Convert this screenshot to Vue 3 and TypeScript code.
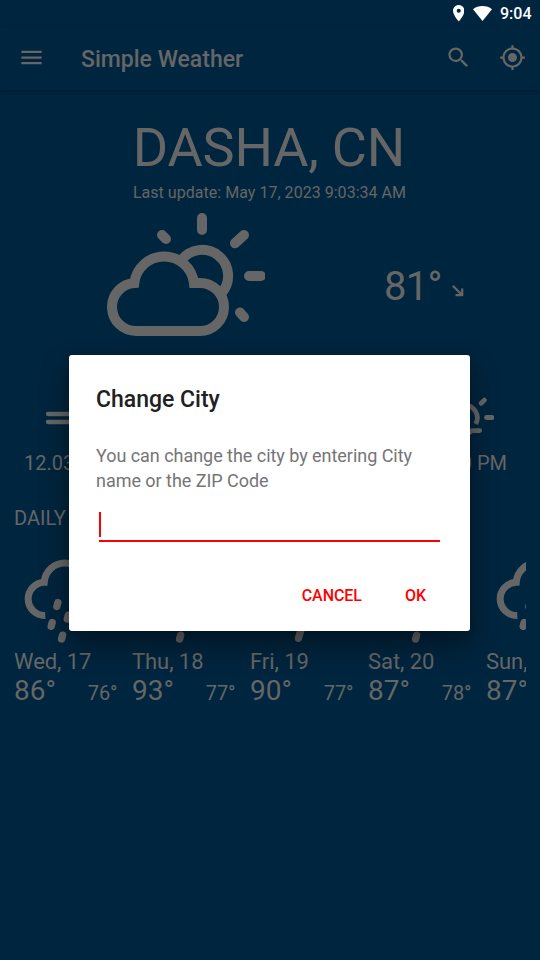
<script setup lang="ts">
interface Day {
  label: string
  high: string
  low: string
  kind: 'showers' | 'rain'
}

const days: Day[] = [
  { label: 'Wed, 17', high: '86°', low: '76°', kind: 'showers' },
  { label: 'Thu, 18', high: '93°', low: '77°', kind: 'showers' },
  { label: 'Fri, 19', high: '90°', low: '77°', kind: 'rain' },
  { label: 'Sat, 20', high: '87°', low: '78°', kind: 'showers' },
  { label: 'Sun,', high: '87°', low: '', kind: 'showers' },
]
</script>

<template>
  <div class="screen">
    <div class="status">
      <svg class="pin" viewBox="5 2 14 20"><path fill="currentColor" d="M12 2C8.130 2 5 5.130 5 9c0 5.250 7 13 7 13s7-7.750 7-13c0-3.870-3.130-7-7-7zm0 9.500a2.500 2.500 0 0 1 0-5 2.500 2.500 0 0 1 0 5z" /></svg>
      <svg class="wifi" viewBox="0 0 19 15"><path fill="currentColor" d="M9.500 15 0 3.200C2.600 1.100 5.900 0 9.500 0S16.400 1.100 19 3.200z" /></svg>
      <span class="clock">9:04</span>
    </div>

    <header class="bar">
      <svg class="icon" viewBox="0 0 24 24"><path fill="currentColor" d="M3 18h18v-2H3v2zm0-5h18v-2H3v2zm0-7v2h18V6H3z" /></svg>
      <h1 class="app-title">Simple Weather</h1>
      <svg class="icon search" viewBox="0 0 24 24"><path fill="currentColor" d="M15.500 14h-.79l-.28-.27A6.471 6.471 0 0 0 16 9.500 6.500 6.500 0 1 0 9.500 16c1.610 0 3.090-.59 4.230-1.570l.27.28v.79l5 4.990L20.490 19l-4.990-5zm-6 0C7.010 14 5 11.990 5 9.500S7.010 5 9.500 5 14 7.010 14 9.500 11.990 14 9.500 14z" /></svg>
      <svg class="icon" viewBox="0 0 24 24"><path fill="currentColor" d="M12 8c-2.210 0-4 1.790-4 4s1.790 4 4 4 4-1.790 4-4-1.790-4-4-4zm8.940 3A8.994 8.994 0 0 0 13 3.060V1h-2v2.060A8.994 8.994 0 0 0 3.060 11H1v2h2.060A8.994 8.994 0 0 0 11 20.940V23h2v-2.060A8.994 8.994 0 0 0 20.940 13H23v-2h-2.060zM12 19c-3.870 0-7-3.130-7-7s3.130-7 7-7 7 3.130 7 7-3.130 7-7 7z" /></svg>
    </header>

    <main>
      <h2 class="city">DASHA, CN</h2>
      <p class="updated">Last update: May 17, 2023 9:03:34 AM</p>

      <section class="now">
        <svg class="now-icon" viewBox="0 0 170 140" fill="none" stroke="currentColor" stroke-width="10">
          <path d="M41 126A24 24 0 0 1 39.300 78.060 A30 30 0 0 1 98.900 78H105a24 24 0 0 1 0 48z" />
          <path d="M86 55.700A26 26 0 1 1 126.500 88.200" />
          <path stroke-linecap="round" d="M107 13v12M140 38.300l9-8.300M154 71h12M145 107.500l4 4.500M67 30l4 4" />
        </svg>
        <div class="temp">
          <span>81°</span>
          <svg class="trend" viewBox="0 0 12 12" fill="none" stroke="currentColor" stroke-width="2.200"><path d="M.8.800 10 10M10.200 3.500v6.700H3.500" /></svg>
        </div>
      </section>

      <section class="details">
        <div class="detail">
          <svg class="detail-icon" viewBox="0 0 60 48" fill="none" stroke="currentColor" stroke-width="4.300" stroke-linecap="round"><path d="M13 24h34M13 32h34" /></svg>
          <span>12.03</span>
        </div>
        <div class="detail right">
          <svg class="detail-icon" viewBox="0 0 60 48" fill="none" stroke="currentColor" stroke-width="4.800" stroke-linecap="round">
            <path stroke-linecap="butt" d="M19 34a12.900 12.900 0 1 1 22.800 0" />
            <path d="M47.200 13.300l3.200-3.200M52.500 27.500h5.300M15 40.600h7l8 6 8-6h7.700" />
          </svg>
          <span>7:00 PM</span>
        </div>
      </section>

      <h3 class="daily-title">DAILY</h3>

      <section class="daily">
        <article v-for="day in days" :key="day.label" class="day">
          <svg class="day-icon" viewBox="0 0 112 93" fill="none" stroke="currentColor" stroke-width="7">
            <path d="M31.300 60.500A16.600 16.600 0 0 1 30.200 27.300A20.700 20.700 0 0 1 71.500 27.300H75.700a16.600 16.600 0 0 1 0 33.200H72" />
            <path v-if="day.kind === 'showers'" stroke-linecap="round" stroke-width="7.400" d="M43.900 47.600l-1 3.800M54.300 60.200l-1 3.800M38.200 67.500l-1 3.800M48.600 80.200l-1 3.800M66.700 47.600l-1 3.800" />
            <path v-else stroke-linecap="round" stroke-width="7.400" d="M43.700 48l-4.500 16M53.500 66l-5 17.200M66 48l-4.500 16" />
          </svg>
          <div class="day-label">{{ day.label }}</div>
          <div class="range"><span class="high">{{ day.high }}</span><span class="low">{{ day.low }}</span></div>
        </article>
      </section>
    </main>

    <div class="dialog" role="dialog">
      <h2 class="dialog-title">Change City</h2>
      <p class="dialog-text">You can change the city by entering City name or the ZIP Code</p>
      <div class="field"><span class="caret"></span></div>
      <div class="actions"><span>CANCEL</span><span>OK</span></div>
    </div>
  </div>
</template>

<style>
body { margin: 0; }
</style>

<style scoped>
* { box-sizing: border-box; }
h1, h2, h3, p { margin: 0; font-weight: 400; }
svg { display: block; flex: none; }
.screen {
  position: relative;
  width: 540px;
  height: 960px;
  overflow: hidden;
  background: #00253e;
  color: #666;
  font-family: Roboto, sans-serif;
  white-space: nowrap;
}
.status {
  height: 27px;
  padding-right: 8.500px;
  display: flex;
  justify-content: flex-end;
  align-items: center;
  color: #fff;
}
.pin { width: 11.500px; height: 16.400px; margin-right: 8.300px; }
.wifi { width: 19px; height: 15px; margin-right: 8.500px; }
.clock { font-size: 16px; font-weight: 500; line-height: 27px; }
.bar {
  height: 63px;
  padding: 0 14px 3px 17.600px;
  display: flex;
  align-items: center;
  box-shadow: 0 1px 3px rgba(0, 0, 0, 0.350);
}
.icon { width: 27px; height: 27px; }
.app-title { flex: 1; margin-left: 36.400px; padding-top: 5px; font-size: 23px; font-weight: 500; line-height: 30px; }
.search { margin-right: 27px; }
.city { height: 64px; margin-top: 26px; padding-right: 2px; text-align: center; font-size: 54px; line-height: 64px; letter-spacing: -0.200px; }
.updated { height: 25px; padding: 1px 1px 0 0; text-align: center; font-size: 16px; line-height: 24px; letter-spacing: 0.030px; }
.now { height: 141px; padding-left: 95px; display: flex; }
.now-icon { width: 170px; height: 140px; }
.temp { margin-left: 119px; padding-top: 57px; height: 107px; display: flex; align-items: center; font-size: 40px; line-height: 48px; letter-spacing: -0.700px; }
.trend { width: 12px; height: 12px; margin: 7px 0 0 10px; }
.details { height: 110px; padding: 44px 33px 0 24px; display: flex; justify-content: space-between; font-size: 20px; }
.detail { display: flex; flex-direction: column; line-height: 26px; }
.detail-icon { width: 60px; height: 48px; margin: 0 0 12px 11px; }
.detail.right { align-items: flex-end; }
.detail.right .detail-icon { margin-right: 13px; }
.daily-title { padding: 49px 0 0 14px; height: 99px; font-size: 20px; line-height: 26px; }
.daily { margin: 0 14px; display: flex; overflow: hidden; }
.day { flex: 0 0 118px; }
.day-icon { width: 112px; height: 93px; }
.day-label { font-size: 22px; line-height: 28px; letter-spacing: -0.060px; }
.range { width: 103.500px; display: flex; justify-content: space-between; align-items: baseline; }
.high { font-size: 28px; line-height: 30px; }
.low { font-size: 20px; letter-spacing: -0.100px; }
.dialog {
  position: absolute;
  left: 69px;
  top: 355px;
  width: 401px;
  height: 276px;
  padding: 29px 30px 0 27px;
  border-radius: 3px;
  background: #fff;
  box-shadow: 0 14px 28px rgba(0, 0, 0, 0.400), 0 1px 8px rgba(0, 0, 0, 0.150);
}
.dialog-title { color: #212121; font-size: 23px; font-weight: 500; line-height: 32px; }
.dialog-text { margin-top: 27px; color: #757575; font-size: 18px; line-height: 25px; letter-spacing: -0.040px; white-space: normal; }
.field { height: 30px; margin: 19px 0 0 3px; border-bottom: 2px solid #f00; }
.caret { display: block; width: 2px; height: 25px; background: #f00; }
.actions { display: flex; justify-content: flex-end; gap: 43px; padding: 44px 14px 0 0; color: #f00; font-size: 16px; font-weight: 500; line-height: 20px; letter-spacing: -0.050px; }
</style>
